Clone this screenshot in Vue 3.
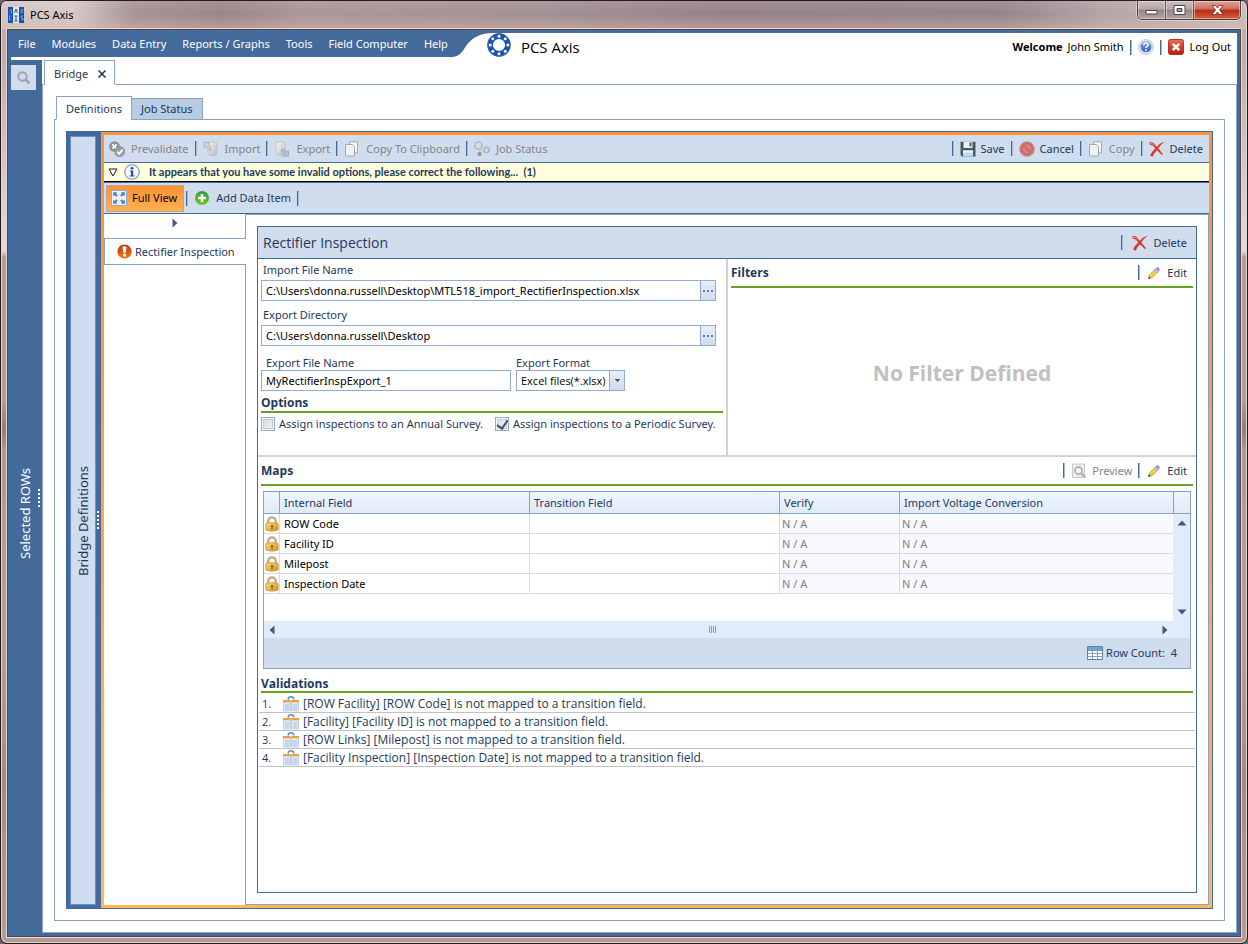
<script setup>
import { ref } from 'vue'

const menus = ['File', 'Modules', 'Data Entry', 'Reports / Graphs', 'Tools', 'Field Computer', 'Help']

const bridgeActions = [
  { label: 'Prevalidate', icon: 'prevalidate' },
  { label: 'Import', icon: 'import' },
  { label: 'Export', icon: 'export' },
  { label: 'Copy To Clipboard', icon: 'copy' },
  { label: 'Job Status', icon: 'jobs' },
]

const recordActions = [
  { label: 'Save', icon: 'save' },
  { label: 'Cancel', icon: 'cancel' },
  { label: 'Copy', icon: 'copy', disabled: true },
  { label: 'Delete', icon: 'delete' },
]

const importFile = ref('C:\\Users\\donna.russell\\Desktop\\MTL518_import_RectifierInspection.xlsx')
const exportDir = ref('C:\\Users\\donna.russell\\Desktop')
const exportName = ref('MyRectifierInspExport_1')
const exportFormat = ref('xlsx')
const annual = ref(false)
const periodic = ref(true)

const fields = ['ROW Code', 'Facility ID', 'Milepost', 'Inspection Date']

const validations = [
  '[ROW Facility] [ROW Code] is not mapped to a transition field.',
  '[Facility] [Facility ID] is not mapped to a transition field.',
  '[ROW Links] [Milepost] is not mapped to a transition field.',
  '[Facility Inspection] [Inspection Date] is not mapped to a transition field.',
]
</script>

<template>
  <svg class="defs" width="0" height="0" aria-hidden="true">
    <defs>
      <linearGradient id="g-grey" x1="0" y1="0" x2="1" y2="1"><stop offset="0" stop-color="#f8f8f8" /><stop offset="1" stop-color="#b4b8bc" /></linearGradient>
      <linearGradient id="g-red" x1="0" y1="0" x2="0" y2="1"><stop offset="0" stop-color="#f06a55" /><stop offset="1" stop-color="#b01c10" /></linearGradient>
      <linearGradient id="g-green" x1="0" y1="0" x2="0" y2="1"><stop offset="0" stop-color="#2b9e45" /><stop offset="1" stop-color="#72c81c" /></linearGradient>
      <linearGradient id="g-fire" x1="0" y1="0" x2="0" y2="1"><stop offset="0" stop-color="#c22f12" /><stop offset="1" stop-color="#f37a10" /></linearGradient>
      <linearGradient id="g-gold" x1="0" y1="0" x2="1" y2="1"><stop offset="0" stop-color="#ffdf80" /><stop offset="1" stop-color="#d08c14" /></linearGradient>
      <linearGradient id="g-blue" x1="0" y1="0" x2="0" y2="1"><stop offset="0" stop-color="#86aef2" /><stop offset="1" stop-color="#2a57c4" /></linearGradient>
    </defs>
    <symbol id="i-prevalidate" viewBox="0 0 16 16">
      <circle cx="5.500" cy="5.500" r="5.300" fill="#8f9295" /><path d="M3.400 3.400l4.200 4.200M7.600 3.400L3.400 7.600" stroke="#fff" stroke-width="1.800" />
      <circle cx="10.800" cy="10.600" r="5" fill="#9c9fa2" stroke="#808386" stroke-width=".6" /><path d="M8.200 10.600l2 2.200 3.500-4.300" fill="none" stroke="#fff" stroke-width="1.800" />
    </symbol>
    <symbol id="i-import" viewBox="0 0 16 16">
      <path d="M5 2q4.500-1.800 9 0v11.500q-4.500 2.600-9 0z" fill="url(#g-grey)" stroke="#bcc0c4" stroke-width=".8" /><path d="M1 1l5.500.500L5.300 3l2.200 2.500q1 3-.5 4.500Q6 7.500 3 5.400L1.300 6.800z" fill="#cdd0d3" stroke="#a3a7ab" stroke-width=".7" />
    </symbol>
    <symbol id="i-export" viewBox="0 0 16 16">
      <path d="M2 1.500q4.500-1.600 9.500 0v11.800q-5 2-9.500 0z" fill="url(#g-grey)" stroke="#bcc0c4" stroke-width=".8" /><path d="M7.500 8.500Q11 8 12.800 11l1.700-1.300v5.500H8.800l1.700-1.600Q9.500 11 7.500 11z" fill="#b9bcc0" stroke="#999da2" stroke-width=".6" />
    </symbol>
    <symbol id="i-copy" viewBox="0 0 16 16">
      <path d="M5.500.8h8v11h-8z" fill="#f3f5f7" stroke="#a5a9ae" /><path d="M1.500 3.500h7l2 2V15h-9z" fill="#f0f2f4" stroke="#a5a9ae" />
    </symbol>
    <symbol id="i-jobs" viewBox="0 0 16 16">
      <circle cx="4.500" cy="4.500" r="3.600" fill="#d9dcdf" stroke="#adb0b4" stroke-width="1.400" /><circle cx="12.500" cy="9" r="2.600" fill="#d5dae0" stroke="#adb0b4" stroke-width="1.400" /><circle cx="5.500" cy="13" r="2.200" fill="#94989d" /><path d="M4.500 9q4 2 6 0" stroke="#bfc3c7" fill="none" />
    </symbol>
    <symbol id="i-save" viewBox="0 0 16 16">
      <path d="M.5.800h15v14.700H2L.5 14z" fill="#4b5867" /><path d="M3.500.800h9v6.200h-9z" fill="#e9f0f6" /><path d="M9.500 1.500h2v4h-2z" fill="#4b5867" /><path d="M3 9.500h10v6H3z" fill="#b6dcf2" /><path d="M3 9.500h10v2H3z" fill="#eff8fd" />
    </symbol>
    <symbol id="i-cancel" viewBox="0 0 16 16">
      <circle cx="8" cy="8" r="7.800" fill="#aa9ea6" /><circle cx="8" cy="8" r="5.500" fill="#c08f94" stroke="#e2645a" stroke-width="2.600" /><path d="M4 4l8 8" stroke="#e2645a" stroke-width="2.600" />
    </symbol>
    <symbol id="i-delete" viewBox="0 0 16 16">
      <path d="M.3 1.500Q3.500 0 5.500 3l2.300 3Q11 1.500 15.700.700 11.500 3.500 9.300 7.500L14 13.300 12.800 14 8 9.200Q5 12 3.600 15.700L1 14.300Q3 10.500 6.300 7.200 4 4 .3 3.300z" fill="#d8392b" /><path d="M1 2.200q3-.2 4.500 2.300" stroke="#f0978c" fill="none" />
    </symbol>
    <symbol id="i-full" viewBox="0 0 16 16">
      <path d="M.5.500h15v15H.5z" fill="#eaf2fb" stroke="#8eabce" /><path d="M2.200 2.200h4L5 3.400l1.800 1.800-1.600 1.600L3.400 5 2.200 6.200zM13.800 2.200h-4L11 3.400 9.200 5.200l1.600 1.600L12.600 5l1.200 1.200zM2.200 13.800h4L5 12.600l1.800-1.800-1.600-1.600L3.400 11 2.200 9.800zM13.800 13.800h-4l1.200-1.200-1.800-1.800 1.600-1.600 1.800 1.800 1.200-1.200z" fill="#4a7cb8" />
    </symbol>
    <symbol id="i-add" viewBox="0 0 16 16">
      <circle cx="8" cy="8" r="7" fill="url(#g-green)" /><path d="M8 4v8M4 8h8" stroke="#fff" stroke-width="2.600" />
    </symbol>
    <symbol id="i-info" viewBox="0 0 16 16">
      <circle cx="8" cy="8" r="7.300" fill="#f4f8fd" stroke="#7f93b4" stroke-width="1.100" /><circle cx="8" cy="4.300" r="1.400" fill="#2549a8" /><path d="M6 6.500h3.200v5h1.300v1H5.700v-1H7v-4H6z" fill="#2549a8" />
    </symbol>
    <symbol id="i-alert" viewBox="0 0 16 16">
      <circle cx="8" cy="8" r="7.600" fill="url(#g-fire)" /><path d="M5.700 3.500Q8 1.500 10.300 3.500L9.200 9.200H6.800z" fill="#fff" /><circle cx="8" cy="11.800" r="1.700" fill="#fff" />
    </symbol>
    <symbol id="i-pencil" viewBox="0 0 16 16">
      <path d="M2.500 13.500l1-3.600L9 4.500l2.600 2.600-5.400 5.400z" fill="#f3d636" stroke="#a98c3a" stroke-width=".8" /><path d="M8.300 5.200L10 3.500l2.600 2.600-1.700 1.700z" fill="#b4d2f2" stroke="#7a8fb5" stroke-width=".6" /><path d="M10 3.500q1.600-1.700 2.900-.300t-.3 2.900z" fill="#dd7edd" stroke="#9a5ca4" stroke-width=".6" /><path d="M2.300 13.700l.6-2.200 1.700 1.600z" fill="#333" />
    </symbol>
    <symbol id="i-preview" viewBox="0 0 16 16">
      <path d="M1.500 1h12v13.500h-12z" fill="#eceded" stroke="#c6c8ca" /><circle cx="7.500" cy="7.500" r="3.500" fill="#f7f7f7" stroke="#b0b2b5" stroke-width="1.800" /><path d="M10 10.200l4.200 4.200" stroke="#b0b2b5" stroke-width="2.600" />
    </symbol>
    <symbol id="i-lock" viewBox="0 0 14 16">
      <path d="M3.200 8V5.200a3.800 3.800 0 0 1 7.600 0V8" fill="none" stroke="#bfab80" stroke-width="2.400" /><path d="M.8 7.500q6.200-1.800 12.400 0V14q-6.200 2.600-12.400 0z" fill="url(#g-gold)" stroke="#c09038" stroke-width=".7" /><circle cx="7" cy="10" r="1.100" fill="#6d5212" /><path d="M6.500 10h1v3h-1z" fill="#6d5212" />
    </symbol>
    <symbol id="i-grid" viewBox="0 0 16 14">
      <path d="M.5.500h15v13H.5z" fill="#fff" stroke="#5f7fb4" /><path d="M1 1h14v3.500H1z" fill="#62add8" /><path d="M1 4.500h14M1 7.500h14M1 10.500h14M5.500 1v12M10.500 1v12" stroke="#7f93bd" stroke-width=".9" />
    </symbol>
    <symbol id="i-map" viewBox="0 0 16 16">
      <path d="M.5 5h7v10h-7zM8.500 5h7v10h-7z" fill="#dfeaf7" stroke="#b3c8e2" stroke-width=".8" /><path d="M0 4h7.500v2.300H0zM8.500 4H16v2.300H8.500z" fill="#f0a030" /><path d="M2 9h4.500M2 11h4.500M2 13h4.500M9.800 9h4.500M9.800 11h4.500M9.800 13h4.500" stroke="#a4bedf" stroke-width=".9" /><path d="M5 3.500Q5.500.8 8 .8t3 2.700" fill="none" stroke="#5b88c8" stroke-width="1.400" />
    </symbol>
    <symbol id="i-help" viewBox="0 0 16 16">
      <circle cx="8" cy="8" r="7.600" fill="#dcdfe6" stroke="#c3c8d2" stroke-width=".8" /><circle cx="8" cy="7.600" r="5.400" fill="url(#g-blue)" /><path d="M5.800 6.300q0-2.200 2.200-2.200t2.200 1.900Q10.200 7.200 8 8.200v.8" fill="none" stroke="#fff" stroke-width="1.500" /><circle cx="8" cy="10.900" r="1" fill="#fff" />
    </symbol>
    <symbol id="i-logout" viewBox="0 0 16 16">
      <rect x=".5" y=".5" width="15" height="15" rx="2" fill="url(#g-red)" stroke="#a8392c" /><path d="M4.800 4.800l6.400 6.400M11.200 4.800l-6.400 6.400" stroke="#fff" stroke-width="2.600" />
    </symbol>
    <symbol id="i-search" viewBox="0 0 16 16">
      <circle cx="6.500" cy="6.500" r="4.200" fill="none" stroke="#a0a5ab" stroke-width="2" /><path d="M9.500 9.500l4 4" stroke="#a0a5ab" stroke-width="2.600" />
    </symbol>
    <symbol id="i-left" viewBox="0 0 6 10"><path d="M5.500.5v9L.5 5z" fill="#44597f" /></symbol>
    <symbol id="i-right" viewBox="0 0 6 10"><path d="M.5.5v9l5-4.500z" fill="#44597f" /></symbol>
    <symbol id="i-up" viewBox="0 0 10 6"><path d="M.5 5.500h9L5 .5z" fill="#44597f" /></symbol>
    <symbol id="i-down" viewBox="0 0 10 6"><path d="M.5.500h9L5 5.500z" fill="#44597f" /></symbol>
  </svg>

  <div class="window">
    <header class="titlebar">
      <svg class="appicon" viewBox="0 0 16 16">
        <path d="M0 0h5v16H0zM11 0h5v16h-5z" fill="#1b51ae" /><path d="M5 0h6v16H5z" fill="#dfeaf6" />
        <path d="M1.500 3h2v3h-2M3.500 9h-2v4h2M12.500 2l2.500 4M15 2l-2.500 4M15 9h-2v2h2v2h-2" fill="none" stroke="#6d9be0" /><path d="M6.500 6L8 2l1.500 4M8 9v5M6.500 9h3M6.500 14h3" fill="none" stroke="#33557f" />
      </svg>
      <span class="apptitle">PCS Axis</span>
      <div class="winbtns">
        <button class="wb" aria-label="Minimize"><svg width="13" height="12" viewBox="0 0 13 12"><path d="M1 6.500h11v3.500H1z" fill="#fff" stroke="#4b4547" /></svg></button>
        <button class="wb" aria-label="Maximize"><svg width="13" height="12" viewBox="0 0 13 12"><path d="M1 1.500h11v9H1z" fill="#fff" stroke="#4b4547" /><path d="M4 4.500h5v3H4z" fill="#a89a9c" stroke="#4b4547" /></svg></button>
        <button class="wb close" aria-label="Close"><svg width="13" height="12" viewBox="0 0 13 12"><path d="M1 1.500h3.500L6.500 4l2-2.500H12L8.500 6l3.500 4.500H8.500L6.500 8l-2 2.500H1L4.500 6z" fill="#fff" stroke="#5c3334" stroke-width=".8" /></svg></button>
      </div>
    </header>

    <div class="client">
      <div class="apphead">
        <nav class="menu">
          <button v-for="m in menus" :key="m">{{ m }}</button>
        </nav>
        <svg class="curve" viewBox="0 0 40 24"><path d="M0 0H40Q22 0 13 13 7 24 0 24z" fill="#446a9c" /></svg>
        <svg class="logo" viewBox="0 0 24 24">
          <circle cx="12" cy="12" r="8.900" fill="none" stroke="#1553b4" stroke-width="5.600" />
          <circle cx="12" cy="12" r="11.300" fill="none" stroke="#4b668c" stroke-width=".8" />
          <g fill="#fff"><circle cx="12" cy="3.200" r="1.500" /><circle cx="12" cy="20.800" r="1.500" /><circle cx="3.200" cy="12" r="1.500" /><circle cx="20.800" cy="12" r="1.500" /><circle cx="5.800" cy="5.800" r="1.500" /><circle cx="18.200" cy="18.200" r="1.500" /><circle cx="5.800" cy="18.200" r="1.500" /><circle cx="18.200" cy="5.800" r="1.500" /></g>
        </svg>
        <span class="brand">PCS Axis</span>
        <div class="user">
          <span class="who"><b>Welcome</b> John Smith</span>
          <i class="sep"></i>
          <button aria-label="Help"><svg class="ic"><use href="#i-help" /></svg></button>
          <i class="sep"></i>
          <button><svg class="ic"><use href="#i-logout" /></svg>Log Out</button>
        </div>
      </div>

      <div class="body">
        <aside class="rows">
          <button class="search" aria-label="Search"><svg class="ic"><use href="#i-search" /></svg></button>
          <div class="vert light">Selected ROWs</div>
          <i class="grip"></i>
        </aside>

        <div class="work">
          <div class="tabs outer-tabs">
            <button class="tab active">Bridge <svg class="x" viewBox="0 0 10 10"><path d="M1.500 1.500l7 7M8.500 1.500l-7 7" stroke="#1e395b" stroke-width="1.600" /></svg></button>
          </div>
          <div class="page">
            <div class="tabs inner-tabs">
              <button class="tab active">Definitions</button>
              <button class="tab">Job Status</button>
            </div>
            <div class="panel">
              <div class="bridge">
                <aside class="defside">
                  <div class="defstrip"><div class="vert">Bridge Definitions</div></div>
                  <i class="grip"></i>
                </aside>
                <main class="editor">
                  <div class="bar">
                    <template v-for="(a, i) in bridgeActions" :key="a.label">
                      <i v-if="i" class="sep"></i>
                      <button class="tool wide" disabled><svg class="ic"><use :href="'#i-' + a.icon" /></svg>{{ a.label }}</button>
                    </template>
                    <span class="fill"></span>
                    <template v-for="a in recordActions" :key="a.label">
                      <i class="sep"></i>
                      <button class="tool" :disabled="a.disabled"><svg class="ic"><use :href="'#i-' + a.icon" /></svg>{{ a.label }}</button>
                    </template>
                  </div>
                  <div class="notice">
                    <svg class="tri" viewBox="0 0 10 9"><path d="M1 1h8L5 8z" fill="#fff" stroke="#1a1a1a" /></svg>
                    <svg class="ic"><use href="#i-info" /></svg>
                    <b>It appears that you have some invalid options, please correct the following...&nbsp; (1)</b>
                  </div>
                  <div class="bar views">
                    <button class="tool full"><svg class="ic"><use href="#i-full" /></svg>Full View</button>
                    <i class="sep"></i>
                    <button class="tool wide"><svg class="ic"><use href="#i-add" /></svg>Add Data Item</button>
                    <i class="sep"></i>
                  </div>

                  <div class="split">
                    <div class="items">
                      <button class="expander" aria-label="Expand"><svg width="6" height="10"><use href="#i-right" /></svg></button>
                      <button class="item"><svg class="ic"><use href="#i-alert" /></svg>Rectifier Inspection</button>
                    </div>
                    <div class="detail">
                      <section class="card">
                        <div class="cardhead">
                          <h1>Rectifier Inspection</h1>
                          <i class="sep"></i>
                          <button class="tool wide"><svg class="ic"><use href="#i-delete" /></svg>Delete</button>
                        </div>
                        <div class="top">
                          <form class="form" @submit.prevent>
                            <label class="l1" for="imp">Import File Name</label>
                            <div class="combo"><input id="imp" v-model="importFile" type="text"><button type="button" aria-label="Browse import file"><i class="dots"></i></button></div>
                            <label class="l1 next" for="dir">Export Directory</label>
                            <div class="combo"><input id="dir" v-model="exportDir" type="text"><button type="button" aria-label="Browse export directory"><i class="dots"></i></button></div>
                            <div class="pair">
                              <div class="name"><label for="nam">Export File Name</label><div class="combo"><input id="nam" v-model="exportName" type="text"></div></div>
                              <div class="format"><label for="fmt">Export Format</label>
                                <div class="combo"><select id="fmt" v-model="exportFormat"><option value="xlsx">Excel files(*.xlsx)</option></select></div>
                              </div>
                            </div>
                            <h2 class="options">Options</h2>
                            <div class="checks">
                              <label><input v-model="annual" type="checkbox">Assign inspections to an Annual Survey.</label>
                              <label><input v-model="periodic" type="checkbox">Assign inspections to a Periodic Survey.</label>
                            </div>
                          </form>
                          <div class="divider"></div>
                          <div class="filters">
                            <div class="sect"><h2>Filters</h2><i class="sep"></i><button class="tool"><svg class="ic"><use href="#i-pencil" /></svg>Edit</button></div>
                            <div class="empty">No Filter Defined</div>
                          </div>
                        </div>

                        <div class="lower">
                          <div class="sect">
                            <h2>Maps</h2><i class="sep"></i>
                            <button class="tool" disabled><svg class="ic"><use href="#i-preview" /></svg>Preview</button><i class="sep"></i>
                            <button class="tool"><svg class="ic"><use href="#i-pencil" /></svg>Edit</button>
                          </div>
                          <div class="grid">
                            <div class="gridbody">
                              <table>
                                <colgroup><col class="c0"><col class="c1"><col class="c1"><col class="c2"><col><col class="cend"></colgroup>
                                <thead><tr><th></th><th>Internal Field</th><th>Transition Field</th><th>Verify</th><th>Import Voltage Conversion</th><th></th></tr></thead>
                                <tbody>
                                  <tr v-for="f in fields" :key="f">
                                    <td class="lk"><svg width="14" height="16"><use href="#i-lock" /></svg></td><td>{{ f }}</td><td></td><td class="na">N / A</td><td class="na last">N / A</td>
                                  </tr>
                                </tbody>
                              </table>
                              <div class="vscroll"><svg width="10" height="6"><use href="#i-up" /></svg><svg width="10" height="6"><use href="#i-down" /></svg></div>
                            </div>
                            <div class="hscroll"><svg width="6" height="10"><use href="#i-left" /></svg><div class="thumb"><i></i></div><svg width="6" height="10"><use href="#i-right" /></svg></div>
                            <div class="gridfoot"><svg width="16" height="14"><use href="#i-grid" /></svg>Row Count:&nbsp; 4</div>
                          </div>
                          <h2 class="valhead">Validations</h2>
                          <ol class="vals">
                            <li v-for="(v, i) in validations" :key="v"><span class="num">{{ i + 1 }}.</span><svg class="ic"><use href="#i-map" /></svg>{{ v }}</li>
                          </ol>
                        </div>
                      </section>
                    </div>
                  </div>
                </main>
              </div>
            </div>
          </div>
        </div>
      </div>
    </div>
  </div>
</template>

<style>
html, body { margin: 0; background: #6f6668; }
</style>

<style scoped>
* { box-sizing: border-box; }
button, input, select { font: inherit; color: inherit; margin: 0; }
button { display: inline-flex; align-items: center; padding: 0; border: 0; background: none; white-space: nowrap; }
svg { display: block; flex: none; }
h1, h2, ol { margin: 0; padding: 0; }
b { font-weight: 700; }
.defs { position: absolute; }
.ic { width: 16px; height: 16px; }
.sep { flex: none; width: 2px; height: 15px; background: #446a9c; border-right: 1px solid #a3b9d8; }

.window {
  min-height: 100vh; display: flex; flex-direction: column; padding: 0 6px 6px;
  border: 1px solid #231a1c; border-radius: 7px; overflow: hidden;
  font: 11px/16px "Noto Sans", "Open Sans", sans-serif; color: #1e395b;
  background: linear-gradient(to bottom, #c3b0ae 0, #c0aeac 60px, #e3dbd9 250px, #b49a95 256px, #b49a95 400px, #977d7a 428px, #b29893 450px, #b79f9b 640px, #a68a87 780px, #b59c98 100%);
  box-shadow: inset 0 0 0 1px #e2d5d2;
}
.titlebar {
  flex: none; display: flex; align-items: flex-start; height: 28px; margin: 0 -5px;
  background: linear-gradient(to bottom, rgba(255,255,255,.1), rgba(255,255,255,0) 45%, rgba(214,188,172,.45)),
    linear-gradient(to right, #d2c4c1 0, #d6cac8 70px, #a89394 130px, #9b8588 220px, #ab9596 300px, #a39093 540px, #96818a 720px, #97848a 1000px, #b5a3a5 1100px, #cbbcbb 100%);
}
.appicon { width: 16px; height: 16px; margin: 6px 0 0 6px; }
.apptitle { margin: 5px 0 0 6px; line-height: 18px; color: #000; }
.winbtns { display: flex; margin: 0 5px 0 auto; height: 19px; border: 1px solid #4c4043; border-top: 0; border-radius: 0 0 5px 5px; overflow: hidden; box-shadow: 0 0 0 1px #dccfcd; }
.wb { width: 28px; justify-content: center; background: linear-gradient(#ccbdbd, #b9a8a9 45%, #96868a 50%, #b3a3a5); border-right: 1px solid #65585b; box-shadow: inset 0 0 0 1px rgba(255,255,255,.4); }
.wb.close { width: 46px; border: 0; background: linear-gradient(#e0a193, #cf6e5c 45%, #b92b14 50%, #d5603f); }

.client { flex: 1; display: flex; flex-direction: column; background: #446a9c; border: 1px solid #55484a; padding: 3px 0 0; box-shadow: 0 0 0 1px #e2d5d2; }
.apphead { flex: none; display: flex; align-items: flex-start; height: 27px; margin: 0 3px; background: #fff; color: #000; }
.menu { display: flex; gap: 16px; height: 24px; padding: 0 5px 0 7px; background: #446a9c; color: #fff; }
.menu button { height: 22px; }
.curve { width: 40px; height: 24px; }
.logo { width: 24px; height: 24px; margin-left: -6px; }
.brand { margin: 3px 0 0 10px; font: 15px/22px "Open Sans", "Noto Sans", sans-serif; }
.user { margin-left: auto; display: flex; align-items: center; gap: 6px; height: 28px; padding-right: 6px; }
.user button { gap: 6px; }
.who { white-space: nowrap; }
.who b { margin-right: 2px; }

.body { flex: 1; display: flex; }
.rows { position: relative; flex: none; width: 34px; display: flex; flex-direction: column; padding: 5px 0 0 3px; }
.search { width: 25px; height: 25px; justify-content: center; background: #d0ddee; }
.vert { writing-mode: vertical-rl; transform: rotate(180deg); text-align: center; font-size: 13px; line-height: 18px; }
.vert.light { flex: 1; color: #fff; margin-left: 5px; }
.grip { position: absolute; right: 2px; top: 50%; width: 2px; height: 19px; margin-top: -9px; background: repeating-linear-gradient(#fff 0 2px, transparent 2px 4px); }

.work { flex: 1; display: flex; flex-direction: column; margin: 0 3px 3px 0; background: #fff; min-width: 0; }
.tabs { display: flex; align-items: flex-end; margin-bottom: -1px; position: relative; }
.outer-tabs { padding-left: 2px; }
.tab { border: 1px solid #8aa3c4; background: #b8cce4; justify-content: center; height: 22px; padding: 0 9px; margin-left: -1px; }
.tab.active { background: #fff; border-bottom-color: #fff; margin-left: 0; height: 24px; padding: 2px 9px 0; }
.outer-tabs .tab.active { height: 25px; gap: 9px; padding: 2px 7px 0 9px; }
.x { width: 10px; height: 10px; }
.page { flex: 1; display: flex; flex-direction: column; border: 1px solid #8aa3c4; padding: 11px; }
.inner-tabs { padding-left: 2px; }
.panel { flex: 1; display: flex; border: 1px solid #8aa3c4; padding: 11px; }
.bridge { flex: 1; display: flex; min-width: 0; background: #446a9c; border: solid #446a9c; border-width: 1px 1px 1px 0; }
.defside { position: relative; flex: none; display: flex; width: 35px; padding: 4px 5px 3px 4px; }
.defstrip { flex: 1; display: flex; justify-content: center; background: #d0ddee; border: 1px solid #5f92dc; }
.editor { flex: 1; min-width: 0; display: flex; flex-direction: column; border: 3px solid; border-image: linear-gradient(#fb923d, #ffb65c) 1; background: #fff; }

.bar { flex: none; display: flex; align-items: center; gap: 6px; height: 28px; padding: 0 6px 0 5px; background: #d0ddee; border-bottom: 1px solid #446a9c; }
.tool { gap: 5px; height: 22px; }
.tool.wide { gap: 6px; }
.tool:disabled { color: #828589; }
.fill { flex: 1; }
.notice { flex: none; display: flex; align-items: center; height: 19px; padding-left: 4px; background: #ffffde; border-bottom: 1px solid #000; font-family: Lato, "Open Sans", sans-serif; }
.notice .ic { margin: 0 9px 0 6px; }
.tri { width: 10px; height: 9px; }
.views { height: 32px; padding-left: 2px; border-top: 1px solid #446a9c; gap: 2px; }
.views .sep { margin-right: 4px; }
.views .tool { padding-right: 4px; }
.views .full { height: 27px; padding: 0 6px 0 4px; color: #000; background: linear-gradient(#fc9236, #ffb152); border: 1px solid #b9a999; }

.split { flex: 1; display: flex; }
.items { flex: none; width: 141px; display: flex; flex-direction: column; }
.expander { height: 24px; padding-bottom: 6px; justify-content: center; }
.item { position: relative; height: 27px; margin-right: -1px; padding-left: 12px; gap: 3px; background: #fff; border: 1px solid #8aa3c4; border-right: 0; }
.item .ic { width: 15px; height: 15px; }
.detail { flex: 1; min-width: 0; display: flex; padding: 11px; border: 1px solid #8aa3c4; }
.card { flex: 1; min-width: 0; border: 1px solid #446a9c; }
.cardhead { display: flex; align-items: center; height: 32px; padding: 0 9px 0 5px; gap: 9px; background: #d0ddee; border-bottom: 1px solid #446a9c; }
h1 { flex: 1; font: 400 14px/20px "Open Sans", "Noto Sans", sans-serif; }
h2 { font: 700 12px/20px "Open Sans", "Noto Sans", sans-serif; }
.top { display: grid; grid-template-columns: 1fr 2px 1fr; height: 198px; border-bottom: 2px solid #d2d2d2; }
.divider { background: #d2d2d2; }
.form { padding: 0 3px; }
.form label { display: block; }
.l1 { line-height: 21px; padding-left: 2px; }
.l1.next { margin-top: 3px; }
.combo { display: flex; height: 21px; border: 1px solid #93acce; color: #000; }
.form > .combo { margin-right: 7px; }
.combo input { flex: 1; min-width: 0; padding: 0 4px; border: 0; outline: 0; background: #fff; }
.combo button { width: 15px; justify-content: center; border-left: 1px solid #93acce; background: linear-gradient(#e6eff9, #cfdced); }
.dots { width: 10px; height: 2px; background: repeating-linear-gradient(to right, #6c7c98 0 2px, transparent 2px 4px); }
.pair { display: flex; gap: 5px; margin-top: 9px; }
.pair label { line-height: 15px; }
.name { width: 250px; }
.name label { padding-left: 5px; }
.format { width: 109px; }
select {
  flex: 1; min-width: 0; appearance: none; border: 0; border-radius: 0; outline: 0; padding: 0 0 0 4px;
  background: linear-gradient(#44597f, #44597f) right 6px top 10px / 1px 1px no-repeat, linear-gradient(#44597f, #44597f) right 5px top 9px / 3px 1px no-repeat, linear-gradient(#44597f, #44597f) right 4px top 8px / 5px 1px no-repeat,
    linear-gradient(#93acce, #93acce) right 14px top 0 / 1px 100% no-repeat, linear-gradient(#e6eff9, #cfdced) right / 14px 100% no-repeat, #fff;
}
.combo select { font-family: "Open Sans", "Noto Sans", sans-serif; }
.options { border-bottom: 2px solid #66a321; height: 22px; padding-top: 3px; line-height: 17px; }
.checks { display: flex; gap: 12px; height: 22px; align-items: center; white-space: nowrap; }
.checks label { display: flex; align-items: center; gap: 4px; }
.checks input { appearance: none; flex: none; width: 14px; height: 14px; margin: 0; border: 1px solid #93acce; background: linear-gradient(135deg, #dadcdf, #f2f3f4); box-shadow: inset 0 0 0 1px #fff, inset 0 0 0 2px #c4c9d2; }
.checks input:checked::after { content: ""; display: block; width: 5px; height: 9px; margin: 0 0 0 3px; border: solid #44506e; border-width: 0 2px 2px 0; transform: rotate(35deg); }
.filters { display: flex; flex-direction: column; padding: 0 3px; }
.sect { display: flex; align-items: center; gap: 6px; height: 29px; padding: 0 6px 0 0; border-bottom: 2px solid #66a321; }
.sect h2 { flex: 1; }
.empty { flex: 1; display: flex; align-items: center; justify-content: center; padding-top: 2px; color: #c0c0c0; font: 700 21px/28px "Open Sans", "Noto Sans", sans-serif; }

.lower { padding: 0 3px; }
.grid { margin: 5px 2px 0; border: 1px solid #8aa3c4; }
.gridbody { display: grid; grid-template-columns: 1fr 17px; min-height: 129px; align-items: start; }
table { grid-area: 1 / 1 / 2 / 3; width: 100%; table-layout: fixed; border-collapse: separate; border-spacing: 0; }
.c0 { width: 16px; }
.c1 { width: 250px; }
.c2 { width: 120px; }
.cend { width: 16px; }
th { height: 22px; padding: 0 4px; text-align: left; font-weight: 400; background: linear-gradient(#f0f5fc, #dfebf9); border-right: 1px solid #8aa3c4; border-bottom: 1px solid #8aa3c4; }
th:last-child { border-right: 0; }
td { height: 20px; padding: 0 4px; line-height: 19px; color: #000; border-right: 1px solid #d5dbe8; border-bottom: 1px solid #d5dbe8; }
td.lk { padding: 0 0 0 1px; }
td.na { padding: 0 2px; color: #808080; background: #f8f9fe; }
td.last { border-right: 0; }
.vscroll { grid-area: 1 / 2 / 2 / 3; align-self: stretch; margin-top: 22px; display: flex; flex-direction: column; justify-content: space-between; align-items: center; padding: 6px 0 6px; background: #e0ecfa; }
.hscroll { display: flex; align-items: center; height: 17px; padding: 0 22px 0 5px; background: #e0ecfa; }
.thumb { flex: 1; display: flex; justify-content: center; margin-right: 12px; }
.thumb i { width: 7px; height: 7px; background: repeating-linear-gradient(to right, #8c9bb4 0 1px, transparent 1px 2px); }
.gridfoot { display: flex; align-items: center; justify-content: flex-end; gap: 3px; height: 30px; padding-right: 13px; background: #d0ddee; }
.valhead { height: 24px; padding-top: 7px; line-height: 16px; border-bottom: 2px solid #66a321; }
.vals { list-style: none; margin: 2px -2px 0; font: 12px/16px "Open Sans", "Noto Sans", sans-serif; }
.vals li { display: flex; align-items: center; height: 18px; border-bottom: 1px solid #c2c2c2; }
.num { width: 24px; padding-left: 3px; font-size: 11px; }
.vals .ic { margin-right: 4px; }
</style>
